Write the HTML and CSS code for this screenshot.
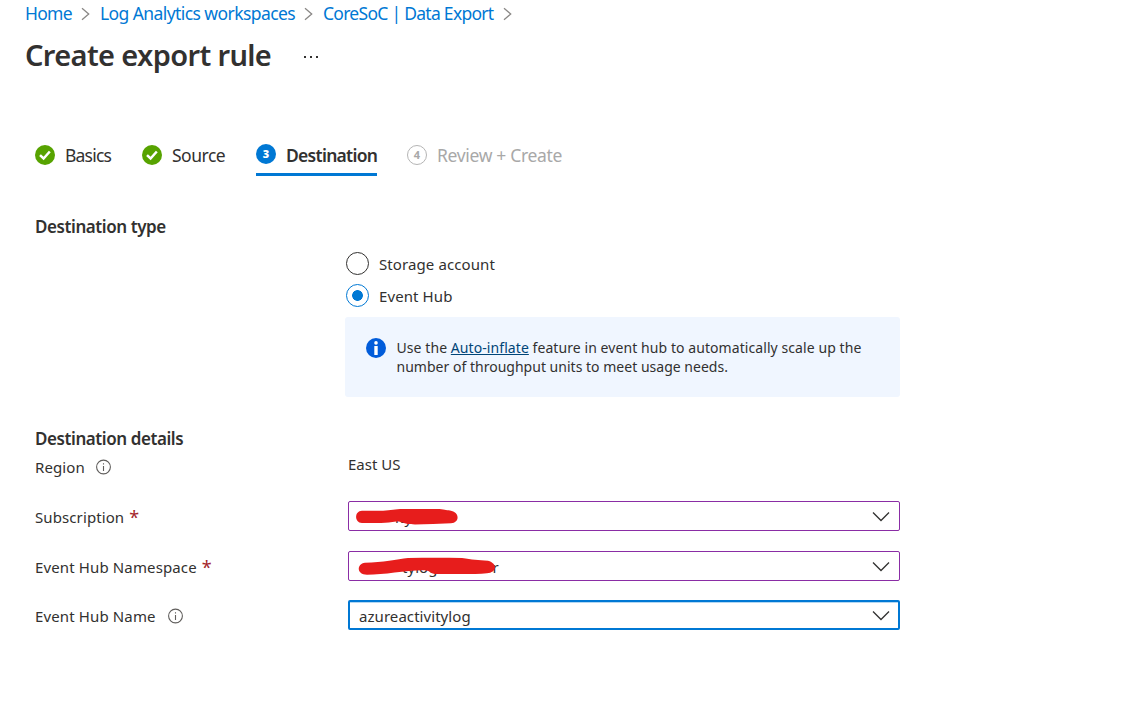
FILE: index.html
```
<!DOCTYPE html>
<html lang="en">
<head>
<meta charset="utf-8">
<title>Create export rule</title>
<link rel="stylesheet" href="styles.css">
</head>
<body>
<nav class="breadcrumb">
  <a class="crumb-home">Home</a>
  <svg class="sep" width="9" height="14" viewBox="0 0 9 14"><path d="M1 1.3 7.7 7 1 12.7"/></svg>
  <a class="crumb-workspaces">Log Analytics workspaces</a>
  <svg class="sep" width="9" height="14" viewBox="0 0 9 14"><path d="M1 1.3 7.7 7 1 12.7"/></svg>
  <a class="crumb-export">CoreSoC | Data Export</a>
  <svg class="sep" width="9" height="14" viewBox="0 0 9 14"><path d="M1 1.3 7.7 7 1 12.7"/></svg>
</nav>
<header class="title-row">
  <h1>Create export rule</h1>
  <svg class="more" width="16" height="4" viewBox="0 0 16 4"><path d="M1 1h2v2H1zM7 1h2v2H7zM13 1h2v2h-2z"/></svg>
</header>
<main>
  <div class="steps">
    <div class="step step-basics">
      <svg width="20" height="20" viewBox="0 0 20 20"><circle cx="10" cy="10" r="10" fill="#57a300"/><path d="M5 10.1 8.6 13.5 14.8 6.5" fill="none" stroke="#fff" stroke-width="2.5"/></svg>
      <span>Basics</span>
    </div>
    <div class="step step-source">
      <svg width="20" height="20" viewBox="0 0 20 20"><circle cx="10" cy="10" r="10" fill="#57a300"/><path d="M5 10.1 8.6 13.5 14.8 6.5" fill="none" stroke="#fff" stroke-width="2.5"/></svg>
      <span>Source</span>
    </div>
    <div class="step step-current">
      <b class="number">3</b>
      <span>Destination</span>
    </div>
    <div class="step step-next">
      <b class="number">4</b>
      <span>Review + Create</span>
    </div>
  </div>
  <h2 class="type-heading">Destination type</h2>
  <div class="options">
    <label class="option"><i class="radio"></i><span class="storage">Storage account</span></label>
    <label class="option"><i class="radio selected"></i><span class="hub">Event Hub</span></label>
    <div class="notice">
      <svg width="20" height="20" viewBox="0 0 20 20"><circle cx="10" cy="10" r="10" fill="#015cda"/><circle cx="10" cy="4.9" r="1.8" fill="#fff"/><path d="M8.3 8h3.4v9H8.3z" fill="#fff"/></svg>
      <p><span class="line-one">Use the <a>Auto-inflate</a> feature in event hub to automatically scale up the</span><br><span class="line-two">number of throughput units to meet usage needs.</span></p>
    </div>
  </div>
  <h2 class="details-heading">Destination details</h2>
  <div class="field region">
    <div class="label"><span class="l-region">Region</span>
      <svg class="hint" width="15" height="16" viewBox="0 0 15 16"><circle cx="7.5" cy="8" r="6.9"/><path d="M7.5 7v5M7.5 4.2v1.3"/></svg>
    </div>
    <div class="plain">East US</div>
  </div>
  <div class="field">
    <div class="label"><span class="l-sub">Subscription</span><em>*</em></div>
    <div class="select">
      <span class="value masked-sub">ity</span>
      <svg class="mask" width="160" height="28" viewBox="0 0 160 28"><path d="M13 8.8H34C42 8.2 46 7 54 7H88C95 7 97 8.2 101 8.5C111 10 111 21 102 21.2C90 21.8 78 22.4 66 22.4C53 22.4 56 19.5 47 19.5C42 20 38 21 32 21H13C5.2 21 5.2 8.8 13 8.8Z"/></svg>
      <svg class="chevron" width="18" height="12" viewBox="0 0 18 12"><path d="M1 1.5 9 9.5 17 1.5"/></svg>
    </div>
  </div>
  <div class="field">
    <div class="label"><span class="l-space">Event Hub Namespace</span><em>*</em></div>
    <div class="select">
      <span class="value masked-space">tylog</span><span class="tail">r</span>
      <svg class="mask" width="160" height="28" viewBox="0 0 160 28"><path d="M16 10.8C34 10.5 48 7.3 59 6C78 5.5 96 5.5 113 6C123 7.5 129 8.4 139 8.7C149 11.5 148 20.5 138 21.2C126 22.5 106 22 89 22C79 22 84 18.5 74 18.2C56 18.5 35 22.7 18 22.7C7.3 22.7 7.5 11.8 16 10.8Z"/></svg>
      <svg class="chevron" width="18" height="12" viewBox="0 0 18 12"><path d="M1 1.5 9 9.5 17 1.5"/></svg>
    </div>
  </div>
  <div class="field">
    <div class="label"><span class="l-name">Event Hub Name</span>
      <svg class="hint" width="15" height="16" viewBox="0 0 15 16"><circle cx="7.5" cy="8" r="6.9"/><path d="M7.5 7v5M7.5 4.2v1.3"/></svg>
    </div>
    <div class="select focused">
      <span class="value">azureactivitylog</span>
      <svg class="chevron" width="18" height="12" viewBox="0 0 18 12"><path d="M1 1.5 9 9.5 17 1.5"/></svg>
    </div>
  </div>
</main>
</body>
</html>
```
FILE: styles.css
```
* { box-sizing: border-box; }
body { margin: 0; background: #fff; color: #323130; font-family: "Noto Sans", "Open Sans", sans-serif; font-size: 15px; }
h1, h2, p { margin: 0; }
span, a, h1, h2, .plain { white-space: nowrap; }
svg { flex: none; display: block; }
.breadcrumb { display: flex; align-items: center; height: 28px; padding-left: 25px; font-size: 17.5px; color: #0078d4; }
.breadcrumb a { line-height: 27px; height: 28px; }
.crumb-home { width: 47px; letter-spacing: -0.75px; }
.crumb-workspaces { width: 195px; letter-spacing: -0.58px; }
.crumb-export { width: 171px; letter-spacing: -0.72px; }
.sep { margin: 0 10px 0 9px; fill: none; stroke: #8a8886; stroke-width: 1.3; }
.title-row { display: flex; align-items: center; height: 54px; padding-left: 25px; }
h1 { width: 278px; font-size: 29px; font-weight: 600; line-height: 40px; letter-spacing: -0.63px; margin-top: -1px; }
.more { margin-top: 4px; fill: #323130; }
main { padding-left: 35px; }
.steps { display: flex; gap: 30px; height: 37px; margin-top: 57px; font-size: 17.5px; }
.step { display: flex; gap: 10px; height: 37px; line-height: 33px; letter-spacing: -0.4px; }
.step svg { margin-top: 6px; }
.step-basics { width: 77px; letter-spacing: -0.8px; }
.step-source { width: 84px; letter-spacing: -0.5px; }
.step-current { width: 121px; color: #323130; font-weight: 600; letter-spacing: -0.72px; border-bottom: 3px solid #0078d4; }
.step-next { color: #a8a8a8; letter-spacing: -0.33px; }
.number { flex: none; display: block; width: 20px; height: 20px; margin-top: 5px; border-radius: 50%; font-size: 11px; line-height: 19px; text-align: center; letter-spacing: 0; }
.step-next .number { margin-top: 6px; border: 1.5px solid #b5b5b5; line-height: 17px; }
.step-current .number { color: #fff; background: #0078d4; }
h2 { font-size: 17px; line-height: 24px; font-weight: 600; letter-spacing: -0.42px; }
.type-heading { margin-top: 39px; }
.options { width: 555px; margin: 8px 0 0 310px; }
.option { display: flex; align-items: center; height: 32.5px; padding-left: 1px; gap: 10px; letter-spacing: 0.1px; }
.option span { padding-top: 2px; }
.option .hub { padding-top: 1px; }
.radio { width: 23px; height: 23px; border: 1.3px solid #323130; border-radius: 50%; }
.radio.selected { border-color: #0078d4; background: radial-gradient(circle, #0078d4 5px, transparent 5.7px); }
.notice { display: flex; gap: 10.5px; height: 80px; margin-top: 5px; padding: 21px 20px 21px 21px; border-radius: 3px; background: #f0f6ff; }
.notice p { font-size: 14px; line-height: 19px; }
.line-one { letter-spacing: 0.075px; }
.line-two { letter-spacing: 0.015px; }
.notice a { color: #004578; text-decoration: underline; }
.details-heading { margin-top: 30px; }
.field { display: grid; grid-template-columns: 313px 552px; align-items: center; height: 30px; margin-bottom: 19.5px; }
.label { display: flex; align-items: center; gap: 11px; padding-top: 2px; }
.label em { margin-left: -6px; color: #a4262c; font-style: normal; font-size: 18px; line-height: 20px; }
.l-region, .l-sub { letter-spacing: 0.1px; }
.l-space, .l-name { letter-spacing: 0.13px; }
.l-name { margin-right: 1px; }
.region { margin-bottom: 20px; }
.plain { margin-top: -4px; }
.hint { fill: none; stroke: #605e5c; stroke-width: 1.1; }
.select { display: flex; align-items: center; position: relative; height: 30px; padding: 0 9px 0 10px; border: 1px solid #8a2da5; border-radius: 2px; }
.focused { padding: 0 8px 0 9px; border: 2px solid #0078d4; box-shadow: inset 0 1px #b3d7f2; }
.value { padding-top: 2px; letter-spacing: 0.06px; }
.masked-sub { padding-left: 36px; }
.masked-space { padding-left: 43px; }
.tail { padding: 2px 0 0 55px; }
.mask { position: absolute; left: 0; top: 0; fill: #e71d1c; }
.chevron { margin-left: auto; margin-top: 2px; fill: none; stroke: #323130; stroke-width: 1.3; }
```
